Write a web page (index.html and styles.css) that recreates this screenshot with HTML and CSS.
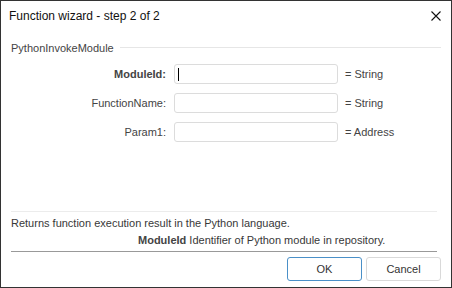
FILE: index.html
```html
<!DOCTYPE html>
<html lang="en">
<head>
    <meta charset="UTF-8">
    <title>Function wizard - step 2 of 2</title>
    <link rel="stylesheet" href="styles.css">
</head>
<body>
    <div class="window">
        <div class="titlebar">
            <span class="title">Function wizard - step 2 of 2</span>
            <svg class="close" width="10" height="10" viewBox="0 0 10 10">
                <path d="M0.5 0.5 L9.5 9.5 M9.5 0.5 L0.5 9.5" stroke="#111" stroke-width="1.1" fill="none"/>
            </svg>
        </div>

        <div class="content">
            <div class="group-head">
                <span>PythonInvokeModule</span>
                <div class="group-line"></div>
            </div>

            <div class="params">
                <label class="param-label bold">ModuleId:</label>
                <div class="field focused"><span class="caret"></span></div>
                <span class="param-type">= String</span>

                <label class="param-label">FunctionName:</label>
                <div class="field"></div>
                <span class="param-type">= String</span>

                <label class="param-label">Param1:</label>
                <div class="field"></div>
                <span class="param-type">= Address</span>
            </div>

            <div class="spacer"></div>

            <div class="help">
                <div class="help-line">Returns function execution result in the Python language.</div>
                <div class="help-arg"><b>ModuleId</b> Identifier of Python module in repository.</div>
            </div>
        </div>

        <div class="footer">
            <button class="btn default">OK</button>
            <button class="btn">Cancel</button>
        </div>
    </div>
</body>
</html>
```

FILE: styles.css
```css
html, body {
    margin: 0;
    padding: 0;
    background: #fff;
}
body {
    font-family: 'Liberation Sans', Arial, sans-serif;
    font-size: 11px;
    color: #383838;
}
.window {
    width: 452px;
    height: 288px;
    box-sizing: border-box;
    border: 1px solid #333;
    display: flex;
    flex-direction: column;
    background: #fff;
}
.titlebar {
    height: 30px;
    display: flex;
    align-items: center;
    justify-content: space-between;
    padding: 0 10px 0 8px;
    flex-shrink: 0;
}
.title {
    font-size: 12px;
    color: #111;
}
.content {
    flex: 1;
    display: flex;
    flex-direction: column;
    padding: 0 10px;
}
.group-head {
    display: flex;
    align-items: center;
    gap: 6px;
    height: 33px;
    color: #444;
}
.group-line {
    flex: 1;
    height: 1px;
    background: #e6e6e6;
}
.params {
    display: grid;
    grid-template-columns: 155px 164px auto;
    column-gap: 8px;
    row-gap: 9px;
    align-items: center;
}
.param-label {
    text-align: right;
    color: #444;
}
.param-label.bold {
    font-weight: bold;
}
.field {
    height: 20px;
    box-sizing: border-box;
    border: 1px solid #dcdcdc;
    border-radius: 3px;
    display: flex;
    align-items: center;
    padding-left: 3px;
}
.caret {
    width: 1px;
    height: 13px;
    background: #000;
}
.param-type {
    margin-left: -1px;
    color: #444;
}
.spacer {
    flex: 1;
}
.help {
    border-top: 1px solid #ececec;
    border-bottom: 1px solid #999;
    padding: 3px 0 2px;
    margin-right: 4px;
}
.help-line {
    height: 17px;
    line-height: 17px;
}
.help-arg {
    height: 17px;
    line-height: 17px;
    padding-left: 127px;
}
.help-arg b {
    color: #444;
}
.footer {
    display: flex;
    justify-content: flex-end;
    gap: 4px;
    padding: 5px 10px 6px;
    flex-shrink: 0;
}
.btn {
    width: 75px;
    height: 24px;
    font-family: inherit;
    font-size: 11px;
    color: #333;
    background: #fff;
    border: 1px solid #d9d9d9;
    border-radius: 3px;
    padding: 0;
}
.btn.default {
    border-color: #4a90c8;
}
```
